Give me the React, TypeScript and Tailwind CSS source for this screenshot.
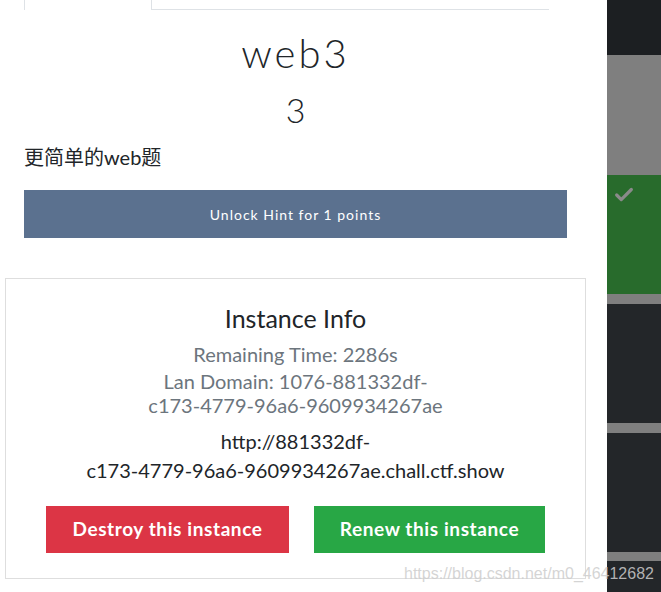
import { Check } from "lucide-react";

const lato = { fontFamily: "Lato, 'Noto Sans', sans-serif" };

function SideStrip() {
  return (
    <div className="flex flex-col w-[54px] shrink-0 h-[592px] bg-[#232629]">
      <div className="h-[55px] bg-[#1c1f22]" />
      <div className="h-[120px] bg-[#7f7f7f]" />
      <div className="h-[119px] bg-[#286b2c] pl-[6px] pt-[9px]">
        <Check size={22} strokeWidth={3.5} className="text-[#8a8a8a]" />
      </div>
      <div className="h-[10px] bg-[#7f7f7f]" />
      <div className="h-[119px]" />
      <div className="h-[10px] bg-[#7f7f7f]" />
      <div className="h-[119px]" />
      <div className="h-[9px] bg-[#7f7f7f]" />
      <div className="flex-1" />
    </div>
  );
}

function InstanceCard() {
  return (
    <div className="border border-[#dedede] bg-white pt-[25px] pb-[25px] text-center" style={lato}>
      <h4 className="text-[25px] leading-[29px] text-[#212529]">Instance Info</h4>
      <p className="mt-[9px] text-[20px] leading-[24px] text-[#6c757d]">Remaining Time: 2286s</p>
      <p className="mt-[3px] text-[20px] leading-[24px] text-[#6c757d]">
        Lan Domain: 1076-881332df-
        <br />
        c173-4779-96a6-9609934267ae
      </p>
      <p className="mt-[10px] text-[20px] leading-[29px] text-[#212529]">
        http://881332df-
        <br />
        c173-4779-96a6-9609934267ae.chall.ctf.show
      </p>
      <div className="mt-[21px] flex justify-center gap-[25px]">
        <button className="h-[47px] w-[243px] bg-[#dc3545] text-white text-[19px] font-bold tracking-[0.6px]">
          Destroy this instance
        </button>
        <button className="h-[47px] w-[231px] bg-[#28a745] text-white text-[19px] font-bold tracking-[0.6px]">
          Renew this instance
        </button>
      </div>
    </div>
  );
}

export default function App() {
  return (
    <div className="relative flex w-[661px] h-[592px] overflow-hidden bg-white">
      <div className="w-[607px] shrink-0 pl-[5px] pr-[21px]">
        <div className="px-[19px]">
          {/* tabs */}
          <div className="flex w-[525px] h-[10px]">
            <div className="w-[128px] border-l border-r border-[#dee2e6]" />
            <div className="flex-1 border-b border-[#dee2e6]" />
          </div>

          <h2
            className="mt-[20px] text-center text-[40px] leading-[47px] font-light tracking-[3px] text-[#212529]"
            style={lato}
          >
            web3
          </h2>
          <h3 className="mt-[12px] text-center text-[34px] leading-[41px] font-light text-[#212529]" style={lato}>
            3
          </h3>

          <p
            className="mt-[12px] text-[20px] leading-[30px] text-[#212529]"
            style={{ fontFamily: "Lato, 'Noto Sans CJK SC', sans-serif" }}
          >
            更简单的web题
          </p>

          <button
            className="mt-[18px] w-full h-[48px] bg-[#5b718f] text-white text-[14px] tracking-[1px]"
            style={lato}
          >
            Unlock Hint for 1 points
          </button>
        </div>

        <div className="mt-[40px]">
          <InstanceCard />
        </div>
      </div>

      <SideStrip />

      {/* watermark */}
      <div
        className="absolute left-[404px] top-[562px] text-[16px] text-[rgba(205,205,205,0.85)]"
        style={{ fontFamily: "'Liberation Sans', Arial, sans-serif" }}
      >
        https://blog.csdn.net/m0_46412682
      </div>
    </div>
  );
}
